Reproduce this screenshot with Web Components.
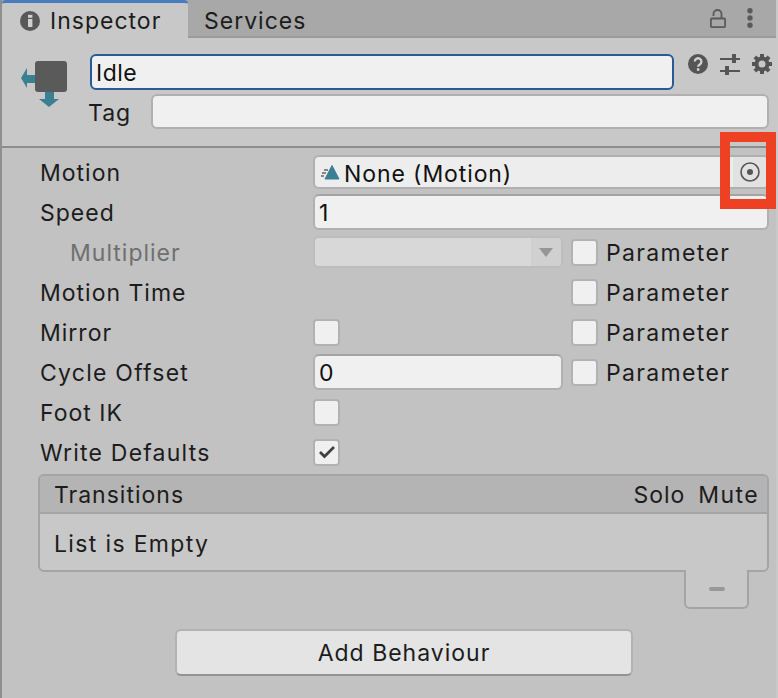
<!DOCTYPE html>
<html lang="en">
<head>
<meta charset="UTF-8">
<title>Inspector</title>
<style>
  html, body { margin: 0; height: 100%; }
  body { background: #c2c2c2; font: 23px/1 Inter, "Liberation Sans", sans-serif; letter-spacing: 1px; color: #1c1c1c; overflow: hidden; }
</style>
</head>
<body>

<inspector-panel>
  <tab-bar></tab-bar>
  <object-header></object-header>
  <div style="height:4px"></div>

  <prop-row label="Motion">
    <object-field>None (Motion)</object-field>
  </prop-row>
  <prop-row label="Speed"><text-field value="1" wide></text-field></prop-row>
  <prop-row label="Multiplier" sub>
    <drop-down></drop-down>
    <param-check slot="param"></param-check>
  </prop-row>
  <prop-row label="Motion Time"><param-check slot="param"></param-check></prop-row>
  <prop-row label="Mirror"><check-box></check-box><param-check slot="param"></param-check></prop-row>
  <prop-row label="Cycle Offset" spacing="1.25"><text-field value="0"></text-field><param-check slot="param"></param-check></prop-row>
  <prop-row label="Foot IK"><check-box></check-box></prop-row>
  <prop-row label="Write Defaults" spacing="1.2"><check-box checked></check-box></prop-row>

  <transition-list></transition-list>
  <add-button>Add Behaviour</add-button>
</inspector-panel>

<red-marker></red-marker>

<script>
  // small helper, every element is just a template string in a shadow root
  function shadow(el, html) {
    el.attachShadow({ mode: 'open' }).innerHTML = html;
  }

  class InspectorPanel extends HTMLElement {
    connectedCallback() {
      shadow(this, `<style>
        :host { display: block; height: 698px; box-sizing: border-box; border-left: 2px solid #8f8f8f; border-right: 2px solid #c9c9c9; }
      </style><slot></slot>`);
    }
  }

  class TabBar extends HTMLElement {
    connectedCallback() {
      shadow(this, `<style>
        :host { display: flex; height: 38px; box-sizing: border-box; background: #a8a8a8; border-bottom: 2px solid #9b9b9b; }
        .tab { display: flex; align-items: center; height: 38px; box-sizing: border-box; }
        .on { width: 186px; background: #c8c8c8; border-top: 3px solid #4a7bc0; border-radius: 4px 4px 0 0; padding: 0 0 0 18px; gap: 10px; }
        .on span, .off { padding-top: 2px; }
        .off { padding-left: 16px; padding-top: 5px; }
        .tools { margin-left: auto; display: flex; align-items: center; gap: 21px; padding: 0 23px 0 0; height: 36px; }
      </style>
      <div class="tab on">
        <svg width="20" height="20" viewBox="0 0 20 20"><circle cx="10" cy="10" r="10" fill="#585858"/><rect x="8" y="8" width="4.400" height="8" fill="#d0d0d0"/><rect x="8" y="3.800" width="4.400" height="3" fill="#d0d0d0"/></svg>
        <span>Inspector</span>
      </div>
      <div class="tab off">Services</div>
      <div class="tools">
        <svg width="16" height="19" viewBox="0 0 16 19" fill="none" stroke="#5a5a5a" stroke-width="1.800"><rect x="0.900" y="9.500" width="14.200" height="8.600" rx="1"/><path d="M3.500 7V5a4 4 0 0 1 8 0v4.500"/></svg>
        <svg width="6" height="20" viewBox="0 0 6 20" fill="#5a5a5a"><circle cx="3" cy="2.700" r="2.700"/><circle cx="3" cy="10" r="2.700"/><circle cx="3" cy="17.300" r="2.700"/></svg>
      </div>`);
    }
  }

  class ObjectHeader extends HTMLElement {
    connectedCallback() {
      shadow(this, `<style>
        :host { display: grid; grid-template-columns: 70px 61px 1fr 95px; grid-template-rows: 36px 35px; row-gap: 4px; height: 110px; box-sizing: border-box; padding: 16px 7px 0 18px; background: #c8c8c8; border-bottom: 2px solid #8c8c8c; }
        .icon { grid-row: 1 / 3; margin-top: 6px; }
        .name { grid-column: 2 / 4; background: #f0f0f0; border: 2px solid #2a5a95; border-radius: 6px; display: flex; align-items: center; padding: 3px 0 0 4px; color: #111; letter-spacing: .5px; }
        .btns { display: flex; gap: 12px; padding-left: 14px; align-items: flex-start; margin-right: -7px; }
        .tag { display: flex; align-items: center; margin-left: -2px; padding-top: 3px; }
        .tagf { grid-column: 3 / 5; background: #f0f0f0; border: 2px solid #b0b0b0; border-radius: 6px; }
      </style>
      <svg class="icon" width="48" height="50" viewBox="0 0 48 50">
        <path d="M1 18L7 8V15H16V23H7V28Z" fill="#3a7f92"/>
        <path d="M25 32H34V39H39L29 47L19 39H25Z" fill="#3a7f92"/>
        <rect x="15" y="1" width="32" height="31" rx="3" fill="#5a5a5a"/>
      </svg>
      <div class="name">Idle</div>
      <div class="btns">
        <svg width="20" height="20" viewBox="0 0 20 20"><circle cx="10" cy="10" r="10" fill="#555"/><path d="M6.800 7.600a3.300 3.300 0 1 1 5 2.800c-1.200.7-1.700 1.200-1.700 2.400" fill="none" stroke="#d0d0d0" stroke-width="2.300"/><rect x="8.900" y="14.200" width="2.500" height="2.600" fill="#d0d0d0"/></svg>
        <svg width="20" height="21" viewBox="0 0 20 21" fill="#555"><rect y="4" width="20" height="2"/><rect x="12" y="0" width="4" height="9"/><rect y="16" width="20" height="2"/><rect x="5" y="12" width="4" height="9"/></svg>
        <svg width="20" height="20" viewBox="0 0 20 20"><circle cx="10" cy="10" r="5.500" fill="none" stroke="#555" stroke-width="4"/><g stroke="#555" stroke-width="4"><path d="M10 0v4M10 16v4M0 10h4M16 10h4M2.900 2.900l2.800 2.800M14.300 14.300l2.800 2.800M2.900 17.100l2.800-2.800M14.300 5.700l2.800-2.800"/></g></svg>
      </div>
      <div class="tag">Tag</div>
      <div class="tagf"></div>`);
    }
  }

  class PropRow extends HTMLElement {
    connectedCallback() {
      const sub = this.hasAttribute('sub');
      const spacing = this.getAttribute('spacing') || 1;
      shadow(this, `<style>
        :host { display: grid; grid-template-columns: 273px 250px 8px 1fr; align-items: center; height: 40px; padding-left: 38px; }
        .label { color: ${sub ? '#6f6f6f' : '#1c1c1c'}; padding: 3px 0 0 ${sub ? 30 : 0}px; letter-spacing: ${spacing}px; }
        .val { display: flex; align-items: center; grid-column: 2 / 3; min-width: 0; }
        .param { grid-column: 4; }
      </style>
      <div class="label">${this.getAttribute('label')}</div>
      <div class="val"><slot></slot></div>
      <div class="param"><slot name="param"></slot></div>`);
    }
  }

  class ObjectField extends HTMLElement {
    connectedCallback() {
      shadow(this, `<style>
        :host { display: flex; align-items: center; box-sizing: border-box; width: 456px; height: 34px; flex: none; background: #ededed; border: 2px solid #b0b0b0; border-radius: 6px; padding-left: 6px; color: #111; position: relative; z-index: 1; letter-spacing: .9px; }
        svg.m { margin-right: 3px; flex: none; }
        .pick { margin-left: auto; width: 34px; height: 30px; background: #e2e2e2; border-radius: 0 4px 4px 0; display: flex; align-items: center; justify-content: center; }
        span { padding-top: 4px; }
      </style>
      <svg class="m" width="20" height="16" viewBox="0 0 20 16">
        <path d="M11 1.500L18 15H4Z" fill="#3a7f92" stroke="#3a7f92" stroke-linejoin="round"/>
        <path d="M3 6h4M1 9h4M0 12h3" stroke="#666" stroke-width="1.300"/>
      </svg>
      <span><slot></slot></span>
      <div class="pick">
        <svg width="20" height="20" viewBox="0 0 20 20"><circle cx="10" cy="10" r="9" fill="none" stroke="#555" stroke-width="1.600"/><circle cx="10" cy="10" r="3" fill="#555"/></svg>
      </div>`);
    }
  }

  class TextField extends HTMLElement {
    connectedCallback() {
      shadow(this, `<style>
        :host { display: flex; align-items: center; flex: none; box-sizing: border-box; height: 36px; width: ${this.hasAttribute('wide') ? 456 : 250}px; background: #f0f0f0; border: 2px solid #b0b0b0; border-top-color: #a4a4a4; border-radius: 6px; padding: 3px 0 0 4px; color: #111; }
      </style>${this.getAttribute('value')}`);
    }
  }

  class DropDown extends HTMLElement {
    connectedCallback() {
      shadow(this, `<style>
        :host { display: flex; box-sizing: border-box; width: 250px; height: 32px; background: #d8d8d8; border: 2px solid #bdbdbd; border-radius: 6px; }
        .arrow { margin-left: auto; width: 30px; background: #d0d0d0; display: flex; align-items: center; justify-content: center; border-radius: 0 4px 4px 0; }
      </style>
      <div class="arrow"><svg width="14" height="9" viewBox="0 0 14 9"><path d="M0 0H14L7 9Z" fill="#969696"/></svg></div>`);
    }
  }

  class CheckBox extends HTMLElement {
    connectedCallback() {
      const tick = this.hasAttribute('checked')
        ? '<svg width="18" height="14" viewBox="0 0 18 14"><path d="M2 7l4.500 4.500L16 2" fill="none" stroke="#404040" stroke-width="2.800"/></svg>'
        : '';
      shadow(this, `<style>
        :host { display: flex; align-items: center; justify-content: center; flex: none; box-sizing: border-box; width: 27px; height: 27px; background: #f0f0f0; border: 2px solid #b2b2b2; border-radius: 4px; }
      </style>${tick}`);
    }
  }

  class ParamCheck extends HTMLElement {
    connectedCallback() {
      shadow(this, `<style>
        :host { display: flex; align-items: center; gap: 8px; }
        span { padding-top: 3px; letter-spacing: 1.35px; }
      </style><check-box></check-box><span>Parameter</span>`);
    }
  }

  class TransitionList extends HTMLElement {
    connectedCallback() {
      shadow(this, `<style>
        :host { display: block; margin: 2px 7px 0 36px; }
        .box { border: 2px solid #a4a4a4; border-radius: 6px; background: #c8c8c8; }
        .head { display: flex; justify-content: space-between; height: 33px; align-items: center; padding: 3px 8px 0 14px; background: #b4b4b4; border-bottom: 2px solid #a4a4a4; border-radius: 4px 4px 0 0; }
        .head div { display: flex; gap: 13px; }
        .mute { letter-spacing: 1.4px; }
        .body { height: 51px; display: flex; align-items: center; padding: 5px 0 0 14px; letter-spacing: 1.35px; }
        .foot { width: 61px; height: 37px; margin: -2px 20px 0 auto; position: relative; background: #c8c8c8; border: 2px solid #a4a4a4; border-top: 0; border-radius: 0 0 6px 6px; display: flex; align-items: center; justify-content: center; }
        .minus { width: 16px; height: 4px; background: #989898; border-radius: 2px; }
      </style>
      <div class="box">
        <div class="head"><span>Transitions</span><div><span>Solo</span><span class="mute">Mute</span></div></div>
        <div class="body">List is Empty</div>
      </div>
      <div class="foot"><div class="minus"></div></div>`);
    }
  }

  class AddButton extends HTMLElement {
    connectedCallback() {
      shadow(this, `<style>
        :host { display: flex; align-items: center; justify-content: center; box-sizing: border-box; width: 458px; height: 47px; margin: 20px 0 0 173px; padding-top: 2px; background: #e4e4e4; border: 2px solid #b2b2b2; border-bottom-color: #939393; border-radius: 6px; }
      </style><slot></slot>`);
    }
  }

  // annotation drawn on top of the screenshot
  class RedMarker extends HTMLElement {
    connectedCallback() {
      shadow(this, `<style>
        :host { position: absolute; left: 720px; top: 132px; width: 56px; height: 77px; box-sizing: border-box; border: 10px solid #ee4023; z-index: 5; }
      </style>`);
    }
  }

  customElements.define('inspector-panel', InspectorPanel);
  customElements.define('tab-bar', TabBar);
  customElements.define('object-header', ObjectHeader);
  customElements.define('prop-row', PropRow);
  customElements.define('object-field', ObjectField);
  customElements.define('text-field', TextField);
  customElements.define('drop-down', DropDown);
  customElements.define('check-box', CheckBox);
  customElements.define('param-check', ParamCheck);
  customElements.define('transition-list', TransitionList);
  customElements.define('add-button', AddButton);
  customElements.define('red-marker', RedMarker);
</script>
</body>
</html>
